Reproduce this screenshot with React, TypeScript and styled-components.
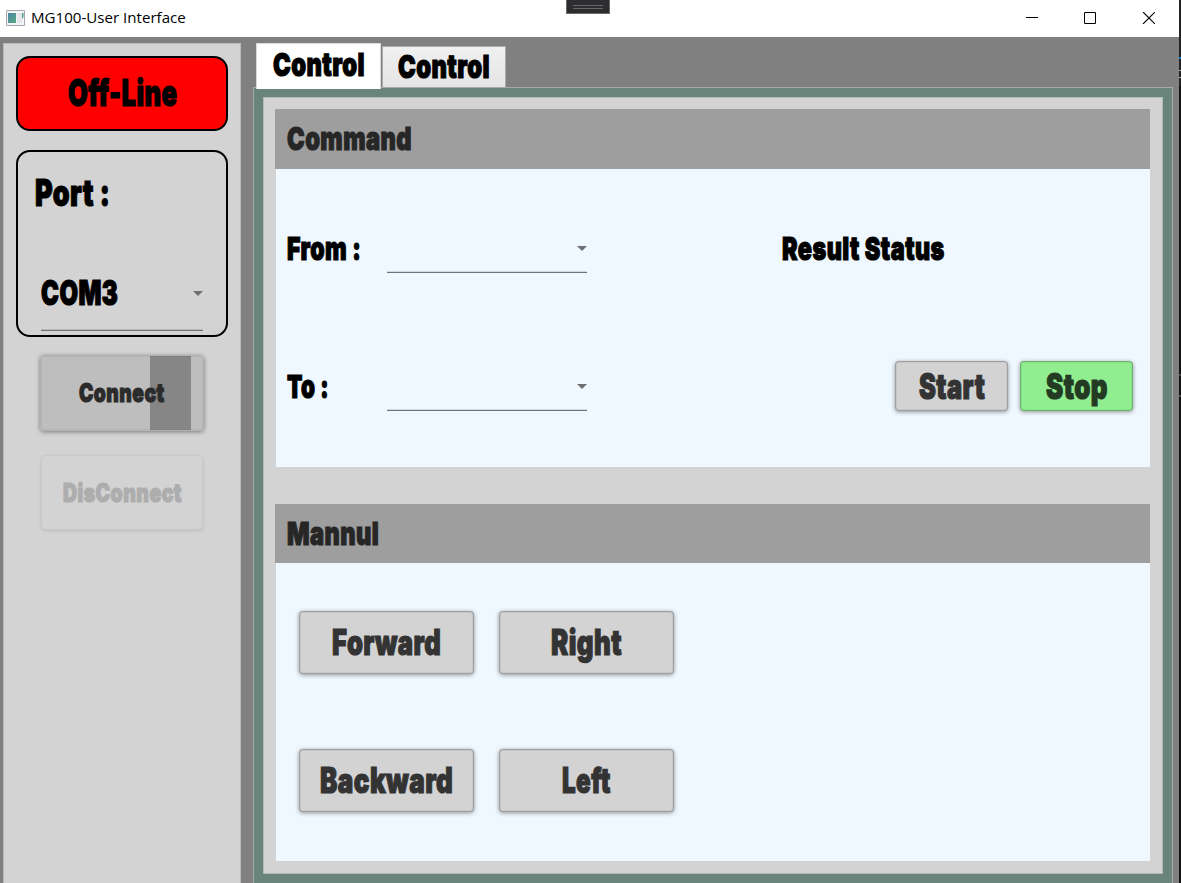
import React, { useLayoutEffect, useRef, useState } from 'react';
import styled, { createGlobalStyle } from 'styled-components';

const Global = createGlobalStyle`
  *, *::before, *::after { box-sizing: border-box; }
  body { margin: 0; overflow: hidden; background: #808080; }
`;

const Desktop = styled.div`
  display: flex;
  width: 1181px;
  height: 883px;
  overflow: hidden;
`;

const Window = styled.div`
  display: flex;
  flex-direction: column;
  width: 1179px;
  background: #808080;
`;

const Backdrop = styled.div`
  width: 2px;
  background: linear-gradient(#222 0 57px, #0a7acb 57px 59px, #222 59px 70px, #a5a5a5 70px 71px, #222 71px 77px,
    #a5a5a5 77px 78px, #222 78px 86px, #111 86px 374px, #444 374px 376px, #111 376px 395px, #444 395px 397px, #111 397px);
`;

const TitleBar = styled.header`
  position: relative;
  display: flex;
  align-items: center;
  flex: none;
  height: 37px;
  padding: 0 24px 2px 6px;
  background: #fff;
`;

const TitleText = styled.div`
  flex: 1;
  padding-left: 6px;
`;

const Grip = styled.div`
  position: absolute;
  top: 0;
  left: 566px;
  width: 44px;
  height: 14px;
  border: 1px solid #686868;
  border-top: 0;
  background: #2d2d30;
  padding: 5px 6px 0;
`;

const GripBars = styled.div`
  height: 4px;
  border: solid #686868;
  border-width: 1px 0;
`;

const Controls = styled.div`
  display: flex;
  align-items: center;
  gap: 46px;
  svg { display: block; }
`;

const Content = styled.div`
  display: flex;
  flex: 1;
  min-height: 0;
  padding: 6px 6px 0 3px;
  gap: 12px;
`;

const Sidebar = styled.aside`
  display: flex;
  flex-direction: column;
  width: 238px;
  padding: 12px;
  border: 1px solid #b9babc;
  border-bottom: 0;
  background: #d3d3d3;
`;

const Status = styled.div`
  flex: none;
  height: 75px;
  padding: 16px 0 0 50px;
  border: 2px solid #000;
  border-radius: 14px;
  background: #f00;
`;

const PortBox = styled.section`
  flex: none;
  height: 187px;
  margin: 19px 0 18px;
  padding: 22px 23px 0 17px;
  border: 2px solid #000;
  border-radius: 14px;
`;

const SidebarButtons = styled.div`
  display: flex;
  flex-direction: column;
  gap: 24px;
  padding: 0 11px 0 24px;
`;

const Select = styled.div<{ $height: number; $width: number }>`
  display: flex;
  justify-content: space-between;
  width: ${p => p.$width}px;
  height: ${p => p.$height}px;
  border-bottom: 1px solid #707274;
  box-shadow: inset 0 -1px 0 rgba(0, 0, 0, 0.12);
`;

const PortSelect = styled(Select)`
  margin: 63px 0 0 6px;
  svg { margin-top: 17px; }
`;

const Button = styled.button<{ $w: number; $h: number; $bg?: string; $fg?: string }>`
  display: flex;
  align-items: center;
  justify-content: center;
  flex: none;
  width: ${p => p.$w}px;
  height: ${p => p.$h}px;
  padding: 0;
  color: ${p => p.$fg || '#333'};
  background: ${p => p.$bg || '#d3d3d3'};
  border: 1px solid rgba(0, 0, 0, 0.24);
  border-radius: 4px;
  box-shadow: inset 0 0 0 1px rgba(0, 0, 0, 0.05), 0 1px 4px rgba(0, 0, 0, 0.42);
`;

const ConnectButton = styled(Button)`
  border-color: #b2b2b2;
  background: linear-gradient(90deg, #bebebe 110px, #868686 110px 151px, #bebebe 151px) border-box;
`;

const DisconnectButton = styled(Button)`
  margin-left: 1px;
  border-color: #c9c9c9;
  box-shadow: 0 1px 3px rgba(0, 0, 0, 0.1);
`;

const Tabs = styled.main`
  display: flex;
  flex-direction: column;
  flex: 1;
`;

const TabStrip = styled.nav`
  position: relative;
  z-index: 1;
  display: flex;
  gap: 1px;
  height: 44px;
  padding-left: 3px;
`;

const Tab = styled.div<{ $active?: boolean }>`
  width: ${p => (p.$active ? 125 : 124)}px;
  height: ${p => (p.$active ? 46 : 41)}px;
  margin-top: ${p => (p.$active ? 0 : 3)}px;
  padding: ${p => (p.$active ? '5px 0 0 16px' : '4px 0 0 15px')};
  border: 1px solid ${p => (p.$active ? '#d9d9d9' : '#acacac')};
  border-bottom: 0;
  background: ${p => (p.$active ? '#fff' : 'linear-gradient(#f0f0f0, #e5e5e5)')};
`;

const TabPanel = styled.div`
  flex: 1;
  padding: 9px 9px 9px 9px;
  border: 1px solid #a3aaa7;
  border-bottom: 0;
  background: #69857b;
`;

const Inner = styled.div`
  display: flex;
  flex-direction: column;
  gap: 37px;
  height: 777px;
  padding: 11px 12px 0 11px;
  border: 1px solid #b1bab6;
  background: #d3d3d3;
`;

const Card = styled.section`
  display: flex;
  flex-direction: column;
`;

const CardHeader = styled.h2<{ $h: number }>`
  height: ${p => p.$h}px;
  margin: 0;
  padding: 14px 0 0 12px;
  color: #262626;
  background: #9e9e9e;
`;

const CardBody = styled.div`
  height: 298px;
  margin-left: 1px;
  background: #f0f8ff;
`;

const CommandBody = styled(CardBody)`
  display: grid;
  grid-template-columns: 100px 395px 1fr;
  grid-template-rows: 138px 138px;
  padding: 64px 17px 0 11px;
`;

const Cell = styled.div<{ $top: number }>`
  padding-top: ${p => p.$top}px;
`;

const Actions = styled.div`
  display: flex;
  justify-content: flex-end;
  gap: 12px;
  margin-top: -10px;
`;

const ManualBody = styled(CardBody)`
  display: grid;
  grid-template-columns: 175px 175px;
  grid-template-rows: 64px 64px;
  gap: 74px 25px;
  padding: 48px 23px 0;
`;

const FieldSelect = styled(Select)`
  svg { margin-top: 13px; }
`;

const FitBox = styled.span<{ $w: number; $size: number }>`
  display: block;
  flex: none;
  width: ${p => p.$w}px;
  height: ${p => p.$size}px;
  line-height: ${p => p.$size}px;
  font-size: ${p => p.$size}px;
`;

const HeavyText = styled.span`
  display: inline-block;
  white-space: pre;
  transform-origin: 0 0;
  font-family: Inter, "Liberation Sans", sans-serif;
  font-weight: 900;
  letter-spacing: 0.6px;
  font-variant-ligatures: none;
  -webkit-text-stroke: 1.2px currentColor;
`;

const PlainText = styled.span`
  display: inline-block;
  white-space: pre;
  transform-origin: 0 0;
  font-family: "Open Sans", "Noto Sans", sans-serif;
  color: #000;
`;

interface FitProps {
  w: number;
  size: number;
  plain?: boolean;
  children: string;
}

/** Condenses a line of text horizontally to the given width. */
function Fit({ w, size, plain, children }: FitProps) {
  const ref = useRef<HTMLSpanElement>(null);
  const [scale, setScale] = useState(1);
  useLayoutEffect(() => {
    const measure = () => ref.current && setScale(w / ref.current.offsetWidth);
    measure();
    document.fonts.ready.then(measure);
  }, [w, size, children]);
  const Text = plain ? PlainText : HeavyText;
  return (
    <FitBox $w={w} $size={size}>
      <Text ref={ref} style={{ transform: `scaleX(${scale})` }}>{children}</Text>
    </FitBox>
  );
}

const Arrow = () => (
  <svg width="10" height="5" viewBox="0 0 10 5"><path d="M0 0h10L5 5z" fill="#6d6f72" /></svg>
);

const AppIcon = () => (
  <svg width="19" height="16" viewBox="0 0 19 16">
    <defs>
      <linearGradient id="pane" x2="1" y2="1"><stop stopColor="#4c84a8" /><stop offset="1" stopColor="#56ab80" /></linearGradient>
    </defs>
    <path d="M.5 .5h18v15H.5z" fill="#f3f4f6" stroke="#a2a8b0" />
    <path d="M2 3h8v10H2z" fill="url(#pane)" />
    <path d="M11 3h5v10h-5z" fill="#e4e6e8" />
    <path d="M16 3h1.5v4L16 9z" fill="#4d9c8a" />
  </svg>
);

export default function App() {
  return (
    <>
      <Global />
      <Desktop>
        <Window>
          <TitleBar>
            <AppIcon />
            <TitleText><Fit plain w={155} size={15}>MG100-User Interface</Fit></TitleText>
            <Grip><GripBars /></Grip>
            <Controls>
              <svg width="12" height="12"><path d="M0 5.5h12" stroke="#000" /></svg>
              <svg width="12" height="12"><path d="M.5 .5h11v11H.5z" fill="none" stroke="#000" /></svg>
              <svg width="13" height="12"><path d="M1 0l12 12M13 0L1 12" fill="none" stroke="#000" strokeWidth="1.1" /></svg>
            </Controls>
          </TitleBar>
          <Content>
            <Sidebar>
              <Status><Fit w={109} size={37}>Off-Line</Fit></Status>
              <PortBox>
                <Fit w={75} size={37}>Port :</Fit>
                <PortSelect $width={162} $height={57}>
                  <Cell $top={2}><Fit w={77} size={34}>COM3</Fit></Cell>
                  <Arrow />
                </PortSelect>
              </PortBox>
              <SidebarButtons>
                <ConnectButton $w={164} $h={76} $fg="#2b2b2b"><Fit w={86} size={26}>Connect</Fit></ConnectButton>
                <DisconnectButton $w={162} $h={75} $fg="#adadad" disabled><Fit w={119} size={26}>DisConnect</Fit></DisconnectButton>
              </SidebarButtons>
            </Sidebar>
            <Tabs>
              <TabStrip>
                <Tab $active><Fit w={92} size={32}>Control</Fit></Tab>
                <Tab><Fit w={92} size={32}>Control</Fit></Tab>
              </TabStrip>
              <TabPanel>
                <Inner>
                  <Card>
                    <CardHeader $h={60}><Fit w={125} size={32}>Command</Fit></CardHeader>
                    <CommandBody>
                      <Cell $top={0}><Fit w={74} size={32}>From :</Fit></Cell>
                      <FieldSelect $width={200} $height={40}><span /><Arrow /></FieldSelect>
                      <Cell $top={0}><Fit w={163} size={32}>Result Status</Fit></Cell>
                      <Cell $top={0}><Fit w={42} size={32}>To :</Fit></Cell>
                      <FieldSelect $width={200} $height={40}><span /><Arrow /></FieldSelect>
                      <Actions>
                        <Button $w={113} $h={50}><Fit w={66} size={35}>Start</Fit></Button>
                        <Button $w={113} $h={50} $bg="#90ee90" $fg="#233a23"><Fit w={62} size={35}>Stop</Fit></Button>
                      </Actions>
                    </CommandBody>
                  </Card>
                  <Card>
                    <CardHeader $h={59}><Fit w={92} size={32}>Mannul</Fit></CardHeader>
                    <ManualBody>
                      <Button $w={175} $h={63}><Fit w={109} size={35}>Forward</Fit></Button>
                      <Button $w={175} $h={63}><Fit w={71} size={35}>Right</Fit></Button>
                      <Button $w={175} $h={63}><Fit w={133} size={35}>Backward</Fit></Button>
                      <Button $w={175} $h={63}><Fit w={49} size={35}>Left</Fit></Button>
                    </ManualBody>
                  </Card>
                </Inner>
              </TabPanel>
            </Tabs>
          </Content>
        </Window>
        <Backdrop />
      </Desktop>
    </>
  );
}
